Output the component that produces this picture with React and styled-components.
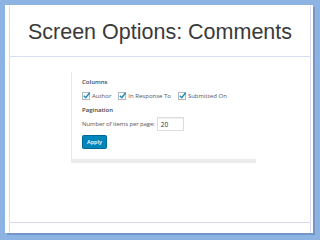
import React from "react";
import styled, { createGlobalStyle } from "styled-components";

const Global = createGlobalStyle`
  html, body { margin: 0; padding: 0; }
  body { width: 320px; height: 240px; overflow: hidden; background: #8db3e2; font-family: "Liberation Sans", Arial, sans-serif; }
`;

const Stage = styled.div`
  width: 320px;
  height: 240px;
  box-sizing: border-box;
  padding: 5px 7px 7px 5px;
  background: #8db3e2;
`;

const Slide = styled.div`
  width: 100%;
  height: 100%;
  background: #fff;
  box-sizing: border-box;
  padding: 0 2px 0 4px;
  box-shadow: 2px 2px 0 #7396c8;
  display: flex;
`;

const Frame = styled.div`
  flex: 1;
  border-left: 1px solid #dcdcf0;
  border-right: 1px solid #dcdcf0;
  display: flex;
  flex-direction: column;
`;

const TitleBar = styled.div`
  height: 52px;
  border-bottom: 1px solid #d4e0f4;
  display: flex;
  align-items: center;
  justify-content: center;
  padding-top: 4px;
  box-sizing: border-box;
`;

const Title = styled.h1`
  margin: 0;
  font-weight: normal;
  font-size: 21.5px;
  color: #3a3a3a;
`;

const Body = styled.div`
  flex: 1;
  padding: 15px 0 0 61px;
`;

const Footer = styled.div`
  height: 10px;
  border-top: 1px solid #d8d8ee;
`;

const Panel = styled.div`
  width: 174px;
  border-left: 1px solid #eaeaea;
  border-bottom: 4px solid #ececec;
  background: #fff;
  padding: 6px 0 10px 10px;
  font-family: "Open Sans", "Liberation Sans", sans-serif;
  font-size: 6px;
  color: #555;
`;

const Label = styled.div`
  font-weight: 600;
  color: #444;
  margin-bottom: ${p => p.mb || 6}px;
`;

const Row = styled.div`
  display: flex;
  align-items: center;
  gap: ${p => p.gap || 0}px;
  margin-bottom: ${p => p.mb || 0}px;
  letter-spacing: ${p => p.tight ? "-0.1px" : "0"};
`;

const Check = styled.span`
  display: inline-flex;
  align-items: center;
  gap: 2px;
`;

const Box = styled.span`
  width: 6px;
  height: 6px;
  border: 1px solid #b4b9be;
  background: #fff;
  position: relative;
  display: inline-block;
  box-sizing: content-box;
`;

const Tick = styled.svg`
  position: absolute;
  left: -1px;
  top: -2px;
`;

const Input = styled.span`
  width: 22px;
  height: 12px;
  border: 1px solid #ddd;
  box-shadow: inset 0 1px 1px rgba(0,0,0,0.07);
  display: inline-flex;
  align-items: center;
  padding-left: 3px;
  margin-left: 2px;
  color: #333;
  font-size: 6.5px;
  letter-spacing: 0;
`;

const Button = styled.span`
  display: inline-flex;
  align-items: center;
  justify-content: center;
  width: 23px;
  height: 12px;
  background: #0085ba;
  border: 1px solid #006799;
  border-radius: 1.5px;
  color: #fff;
  font-weight: 600;
  font-size: 5.5px;
`;

const CheckItem = ({ children }) => (
  <Check>
    <Box>
      <Tick width="9" height="9" viewBox="0 0 10 10">
        <path d="M2 5.2 L4.2 7.4 L8.5 2" fill="none" stroke="#1e8cbe" strokeWidth="1.6" />
      </Tick>
    </Box>
    {children}
  </Check>
);

export default function App() {
  return (
    <>
      <Global />
      <Stage>
        <Slide>
          <Frame>
            <TitleBar>
              <Title>Screen Options: Comments</Title>
            </TitleBar>
            <Body>
              <Panel>
                <Label>Columns</Label>
                <Row gap={7} mb={6}>
                  <CheckItem>Author</CheckItem>
                  <CheckItem>In Response To</CheckItem>
                  <CheckItem>Submitted On</CheckItem>
                </Row>
                <Label mb={3}>Pagination</Label>
                <Row mb={4} tight>
                  Number of items per page:
                  <Input>20</Input>
                </Row>
                <Button>Apply</Button>
              </Panel>
            </Body>
            <Footer />
          </Frame>
        </Slide>
      </Stage>
    </>
  );
}
